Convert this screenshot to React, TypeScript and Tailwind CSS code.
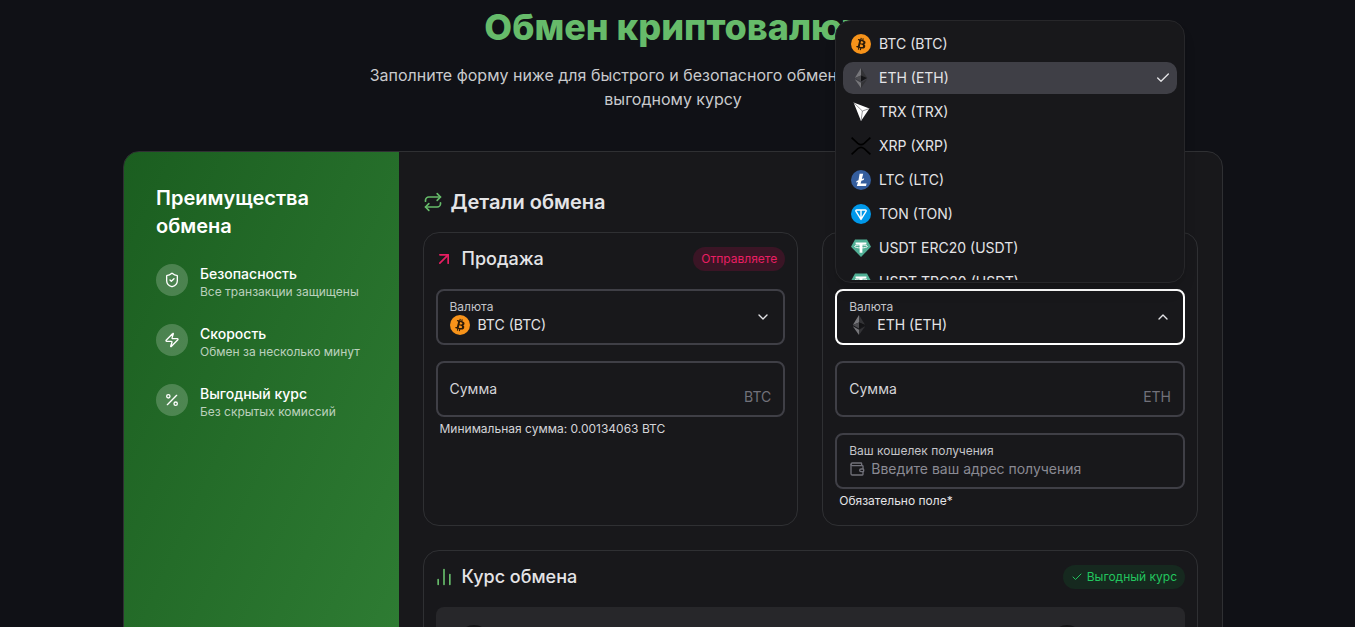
import {
  ArrowUpRight,
  Check,
  ChartNoAxesColumn,
  ChevronDown,
  ChevronUp,
  Percent,
  Repeat,
  ShieldCheck,
  Wallet,
  Zap,
} from "lucide-react";

type CoinKind = "btc" | "eth" | "trx" | "xrp" | "ltc" | "ton" | "usdt";

function Coin({ kind }: { kind: CoinKind }) {
  if (kind === "btc") {
    return (
      <svg viewBox="0 0 32 32" className="h-5 w-5 shrink-0">
        <circle cx="16" cy="16" r="16" fill="#f7931a" />
        <path
          fill="#2a1a08"
          d="M23.189 14.02c.314-2.096-1.283-3.223-3.465-3.975l.708-2.84-1.728-.43-.69 2.765c-.454-.114-.92-.22-1.385-.326l.695-2.783L15.596 6l-.708 2.839c-.376-.086-.746-.17-1.104-.26l.002-.009-2.384-.595-.46 1.846s1.283.294 1.256.312c.7.175.826.638.805 1.006l-.806 3.235c.048.012.11.03.18.057l-.183-.045-1.13 4.532c-.086.212-.303.531-.793.41.018.025-1.256-.313-1.256-.313l-.858 1.978 2.25.561c.418.105.828.215 1.231.318l-.715 2.872 1.727.43.708-2.84c.472.127.93.245 1.378.357l-.706 2.828 1.728.43.715-2.866c2.948.558 5.164.333 6.097-2.333.752-2.146-.037-3.385-1.588-4.192 1.13-.26 1.98-1.003 2.207-2.538zm-3.95 5.538c-.533 2.147-4.148.986-5.32.695l.95-3.805c1.172.293 4.929.872 4.37 3.11zm.535-5.569c-.487 1.953-3.495.96-4.47.717l.86-3.45c.975.243 4.118.696 3.61 2.733z"
        />
      </svg>
    );
  }
  if (kind === "eth") {
    return (
      <svg viewBox="0 0 20 20" className="h-5 w-5 shrink-0">
        <polygon points="10,0 3.8,10 10,7.4" fill="#77777b" />
        <polygon points="10,0 16.2,10 10,7.4" fill="#333336" />
        <polygon points="10,7.4 3.8,10 10,13.6" fill="#4c4c50" />
        <polygon points="10,7.4 16.2,10 10,13.6" fill="#141416" />
        <polygon points="3.8,11.2 10,20 10,14.8" fill="#77777b" />
        <polygon points="16.2,11.2 10,20 10,14.8" fill="#333336" />
      </svg>
    );
  }
  if (kind === "trx") {
    return (
      <svg viewBox="0 0 20 20" className="h-5 w-5 shrink-0">
        <polygon points="2.6,0.6 18.4,6.6 10,19" fill="#ffffff" />
        <path d="M2.6 0.6 L11.4 9 L10 19 M11.4 9 L18.4 6.6" stroke="#6b6b70" strokeWidth="0.7" fill="none" />
      </svg>
    );
  }
  if (kind === "xrp") {
    return (
      <svg viewBox="0 0 20 20" className="h-5 w-5 shrink-0" fill="none" stroke="#000000" strokeWidth="1.6">
        <path d="M0.6 1.6 L6.8 7.4 Q10 10 13.2 7.4 L19.4 1.6" />
        <path d="M0.6 18.4 L6.8 12.6 Q10 10 13.2 12.6 L19.4 18.4" />
      </svg>
    );
  }
  if (kind === "ltc") {
    return (
      <svg viewBox="0 0 20 20" className="h-5 w-5 shrink-0">
        <circle cx="10" cy="10" r="10" fill="#345d9d" />
        <path fill="#ffffff" d="M8.6 3.8 L12.2 3.8 L10.9 9 L13.2 8.2 L12.7 10 L10.4 10.8 L9.6 13.6 L15.6 13.6 L15 16 L5.8 16 L7 11.9 L5.1 12.6 L5.6 10.9 L7.5 10.2 Z" />
      </svg>
    );
  }
  if (kind === "ton") {
    return (
      <svg viewBox="0 0 20 20" className="h-5 w-5 shrink-0">
        <circle cx="10" cy="10" r="10" fill="#0098ea" />
        <path d="M5.8 6 H14.2 Q15.6 6 15 7.4 L10 15.4 L5 7.4 Q4.4 6 5.8 6 Z M10 6 V15.4" fill="none" stroke="#ffffff" strokeWidth="1.4" strokeLinejoin="round" />
      </svg>
    );
  }
  return (
    <svg viewBox="0 0 20 20" className="h-5 w-5 shrink-0">
      <polygon points="4,1.5 16,1.5 20,8.8 10,19 0,8.8" fill="#50af95" />
      <path fill="#ffffff" d="M4.6 4.4 H15.4 V6.6 H11.4 V14.8 H8.6 V6.6 H4.6 Z" />
      <ellipse cx="10" cy="8.4" rx="6.4" ry="1.5" fill="none" stroke="#ffffff" strokeWidth="0.9" />
    </svg>
  );
}

const coins: { kind: CoinKind; label: string; active?: boolean }[] = [
  { kind: "btc", label: "BTC (BTC)" },
  { kind: "eth", label: "ETH (ETH)", active: true },
  { kind: "trx", label: "TRX (TRX)" },
  { kind: "xrp", label: "XRP (XRP)" },
  { kind: "ltc", label: "LTC (LTC)" },
  { kind: "ton", label: "TON (TON)" },
  { kind: "usdt", label: "USDT ERC20 (USDT)" },
  { kind: "usdt", label: "USDT TRC20 (USDT)" },
];

const perks = [
  { icon: ShieldCheck, title: "Безопасность", text: "Все транзакции защищены" },
  { icon: Zap, title: "Скорость", text: "Обмен за несколько минут" },
  { icon: Percent, title: "Выгодный курс", text: "Без скрытых комиссий" },
];

function CurrencySelect({ kind, label, open }: { kind: CoinKind; label: string; open?: boolean }) {
  return (
    <div
      className={`flex h-14 items-center justify-between rounded-lg border-2 px-3 ${
        open ? "border-white" : "border-[#3f3f46]"
      }`}
    >
      <div>
        <div className="text-xs leading-4 text-[#c4c4c9]">Валюта</div>
        <div className="flex h-5 items-center gap-2 text-sm text-[#e4e4e7]">
          <Coin kind={kind} />
          {label}
        </div>
      </div>
      {open ? (
        <ChevronUp className="h-4 w-4 text-[#e4e4e7]" />
      ) : (
        <ChevronDown className="h-4 w-4 text-[#e4e4e7]" />
      )}
    </div>
  );
}

function AmountField({ unit }: { unit: string }) {
  return (
    <div className="mt-4 flex h-14 items-end justify-between rounded-lg border-2 border-[#3f3f46] px-3 pb-2">
      <span className="mb-2 text-sm leading-5 text-[#d4d4d8]">Сумма</span>
      <span className="text-sm leading-5 text-[#71717a]">{unit}</span>
    </div>
  );
}

export default function App() {
  return (
    <div className="relative h-screen overflow-hidden bg-[#101116] font-['Inter',sans-serif] antialiased">
      <div className="w-[1346px] pt-2">
        <h1 className="-mt-px text-center text-4xl leading-10 font-extrabold text-[#66bb6a]">Обмен криптовалют</h1>
        <p className="mx-auto mt-4 max-w-2xl text-center text-base leading-6 text-[#c9cacd]">
          Заполните форму ниже для быстрого и безопасного обмена криптовалют по выгодному курсу
        </p>

        <div className="mx-auto mt-10 flex w-[1100px] overflow-hidden rounded-2xl border border-[#2f3033] bg-[#18181b]">
          <aside className="-mt-px w-[274.5px] shrink-0 border-t border-[#5f8f63] bg-gradient-to-br from-[#1b5e20] to-[#307f35] p-8">
            <h2 className="text-xl leading-7 font-semibold text-white">Преимущества обмена</h2>
            <div className="mt-6 space-y-6">
              {perks.map((perk) => (
                <div key={perk.title} className="flex items-start gap-3">
                  <div className="flex h-8 w-8 items-center justify-center rounded-full bg-white/20">
                    <perk.icon className="h-4 w-4 text-white" />
                  </div>
                  <div>
                    <div className="text-sm leading-5 font-medium text-white">{perk.title}</div>
                    <div className="text-xs leading-4 text-white/70">{perk.text}</div>
                  </div>
                </div>
              ))}
            </div>
          </aside>

          <main className="min-w-0 flex-1 px-6 pt-9">
            <div className="flex items-center gap-2">
              <Repeat className="h-5 w-5 text-[#66bb6a]" />
              <h2 className="text-xl leading-7 font-semibold text-[#e4e4e7]">Детали обмена</h2>
            </div>

            <div className="mt-4 grid grid-cols-2 gap-6">
              <section className="h-[294px] rounded-2xl border border-[#2f3033] p-3">
                <div className="mb-4 flex h-7 items-center justify-between">
                  <div className="flex items-center gap-2">
                    <ArrowUpRight className="-ml-0.5 h-5 w-5 text-[#e91e63]" />
                    <span className="text-lg font-medium text-[#e4e4e7]">Продажа</span>
                  </div>
                  <span className="flex h-6 items-center rounded-full bg-[#3a1525] px-2 text-xs text-[#e91e63]">
                    Отправляете
                  </span>
                </div>
                <CurrencySelect kind="btc" label="BTC (BTC)" />
                <AmountField unit="BTC" />
                <p className="mt-1 px-1 text-xs leading-4 text-[#d4d4d8]">Минимальная сумма: 0.00134063 BTC</p>
              </section>

              <section className="h-[294px] rounded-2xl border border-[#2f3033] p-3">
                <div className="mb-4 h-7" />
                <CurrencySelect kind="eth" label="ETH (ETH)" open />
                <AmountField unit="ETH" />
                <div className="mt-4 flex h-14 flex-col justify-center rounded-lg border-2 border-[#3f3f46] px-3">
                  <div className="text-xs leading-4 text-[#c4c4c9]">Ваш кошелек получения</div>
                  <div className="flex h-5 items-center gap-1.5 text-sm text-[#8a8a93]">
                    <Wallet className="h-4 w-4 text-[#71717a]" />
                    Введите ваш адрес получения
                  </div>
                </div>
                <p className="mt-1 px-1 text-xs leading-4 text-[#e4e4e7]">Обязательно поле*</p>
              </section>
            </div>

            <section className="mt-6 rounded-2xl border border-[#2f3033] p-3">
              <div className="mb-4 flex h-7 items-center justify-between">
                <div className="flex items-center gap-2">
                  <ChartNoAxesColumn className="-ml-0.5 h-5 w-5 text-[#66bb6a]" />
                  <span className="text-lg font-medium text-[#e4e4e7]">Курс обмена</span>
                </div>
                <span className="flex h-6 items-center gap-1 rounded-full bg-[#16291f] px-2 text-xs text-[#22c55e]">
                  <Check className="h-3 w-3" />
                  Выгодный курс
                </span>
              </div>
              <div className="flex h-32 gap-[561px] rounded-lg bg-[#27272a] pt-[18px] pl-[22px]">
                <div className="h-8 w-8 rounded-full bg-[#141416]" />
                <div className="h-8 w-8 rounded-full bg-[#141416]" />
              </div>
            </section>
          </main>
        </div>
      </div>

      <div className="absolute top-5 left-[835px] h-[263px] w-[350px] rounded-2xl border border-[#27272a] bg-[#18181b] px-[7px] pt-[7px] shadow-lg">
        <div className="h-[252px] space-y-0.5 overflow-hidden">
          {coins.map((coin) => (
            <div
              key={coin.label}
              className={`flex h-8 items-center gap-2 rounded-[10px] pr-1.5 pl-2 text-sm text-[#e4e4e7] ${
                coin.active ? "bg-[#3f3f46]" : ""
              }`}
            >
              <Coin kind={coin.kind} />
              <span className="flex-1">{coin.label}</span>
              {coin.active && <Check className="h-4 w-4" />}
            </div>
          ))}
        </div>
      </div>
    </div>
  );
}
